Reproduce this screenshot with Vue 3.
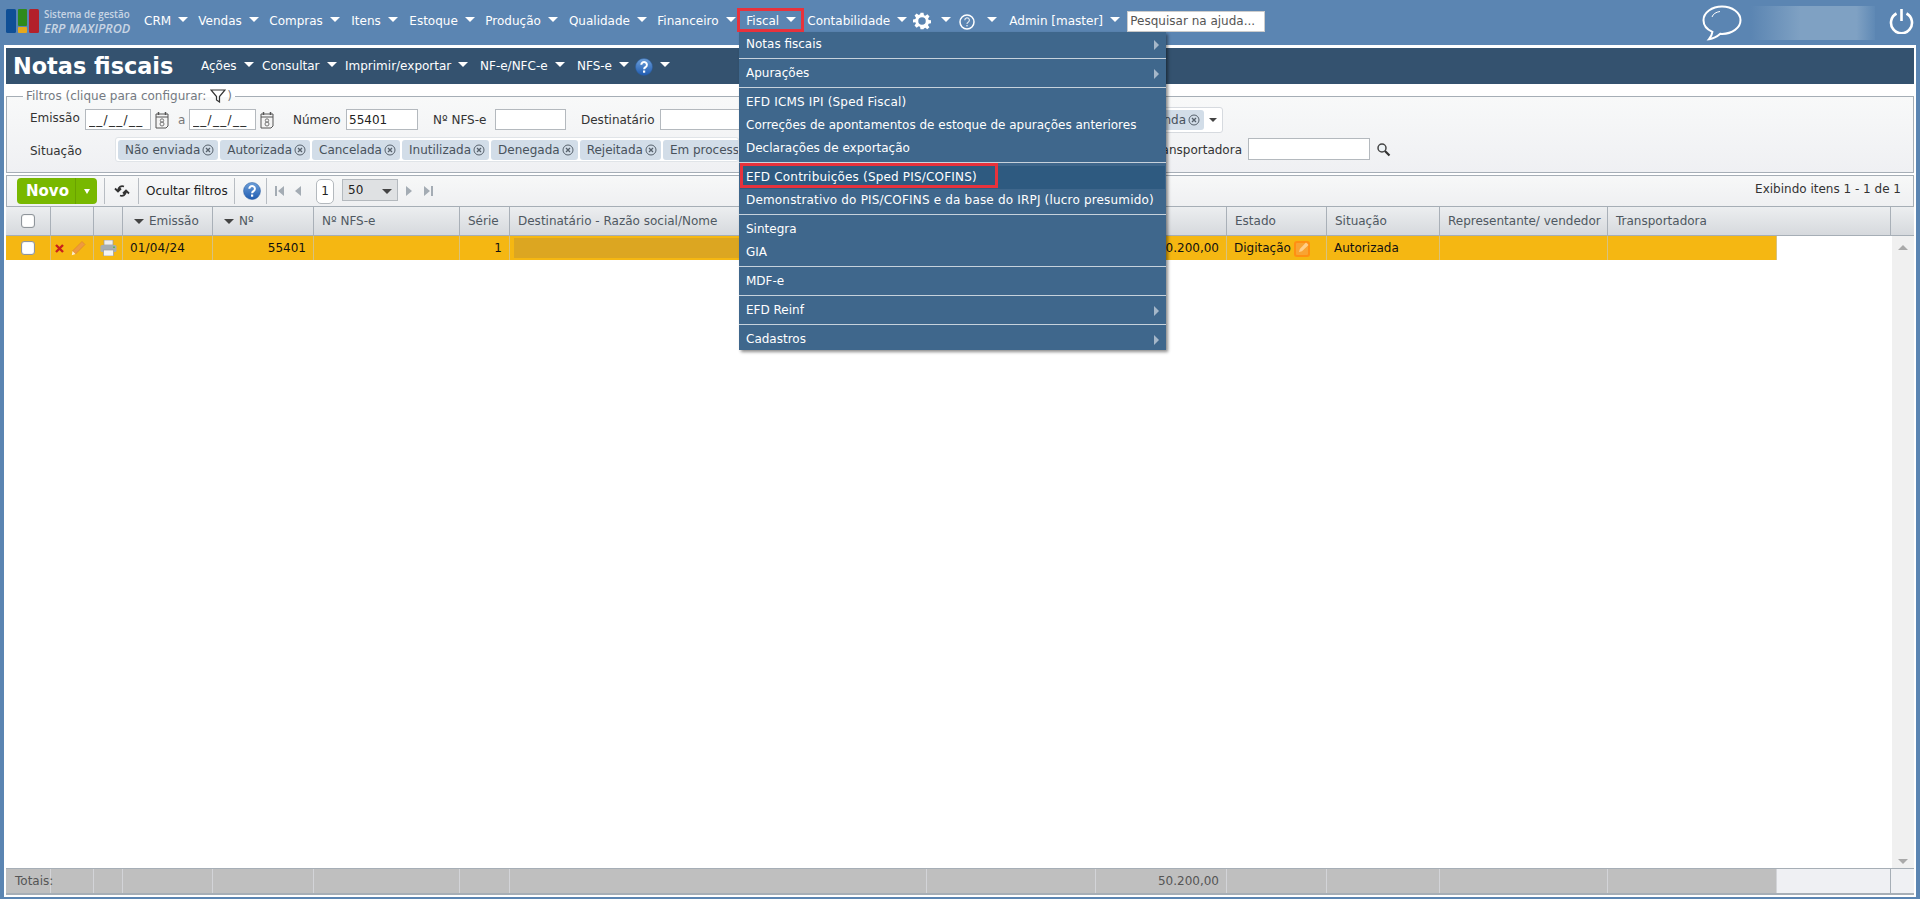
<script setup>
const topNav = [
  { label: 'CRM', w: 54.3 }, { label: 'Vendas', w: 71 }, { label: 'Compras', w: 82 }, { label: 'Itens', w: 58 },
  { label: 'Estoque', w: 76 }, { label: 'Produção', w: 83.6 }, { label: 'Qualidade', w: 88.4 }, { label: 'Financeiro', w: 89 }
]
const subNav = [
  { label: 'Ações', w: 61 }, { label: 'Consultar', w: 83 }, { label: 'Imprimir/exportar', w: 135 },
  { label: 'NF-e/NFC-e', w: 97 }, { label: 'NFS-e', w: 58 }
]
const chips = ['Não enviada', 'Autorizada', 'Cancelada', 'Inutilizada', 'Denegada', 'Rejeitada', 'Em processamento']
const cols = [
  { t: '' , k: 'check' }, { t: '' }, { t: '' }, { t: 'Emissão', sort: true }, { t: 'Nº', sort: true }, { t: 'Nº NFS-e' }, { t: 'Série' },
  { t: 'Destinatário - Razão social/Nome' }, { t: '' }, { t: 'Total (R$)' }, { t: 'Estado' }, { t: 'Situação' },
  { t: 'Representante/ vendedor' }, { t: 'Transportadora' }
]
const menu = [
  [{ t: 'Notas fiscais', sub: true }],
  [{ t: 'Apurações', sub: true }],
  [{ t: 'EFD ICMS IPI (Sped Fiscal)', wide: true }, { t: 'Correções de apontamentos de estoque de apurações anteriores' }, { t: 'Declarações de exportação' }],
  [{ t: 'EFD Contribuições (Sped PIS/COFINS)', active: true, wide: true }, { t: 'Demonstrativo do PIS/COFINS e da base do IRPJ (lucro presumido)', wide: true }],
  [{ t: 'Sintegra' }, { t: 'GIA' }],
  [{ t: 'MDF-e' }],
  [{ t: 'EFD Reinf', sub: true }],
  [{ t: 'Cadastros', sub: true }]
]
</script>

<template>
  <div class="page">
    <header class="topbar">
      <div class="logo">
        <svg width="33" height="24" viewBox="0 0 33 24">
          <rect x="0" y="0" width="10" height="24" rx="1.5" fill="#0f4f96" />
          <rect x="12" y="0" width="9" height="17" rx="1" fill="#2f8a1c" />
          <rect x="12" y="18" width="9" height="6" rx="1" fill="#e6a81c" />
          <rect x="23" y="0" width="10" height="24" rx="1.5" fill="#b3202a" />
        </svg>
        <div class="logo-text">
          <span class="logo-a">Sistema de gestão</span>
          <span class="logo-b">ERP MAXIPROD</span>
        </div>
      </div>
      <nav class="topnav">
        <span v-for="n in topNav" :key="n.label" class="navitem" :style="{ width: n.w + 'px' }">{{ n.label }}<i class="caret"></i></span>
        <span class="navitem fiscal">Fiscal<i class="caret"></i></span>
        <span class="navitem conta">Contabilidade<i class="caret"></i></span>
        <svg class="gear" width="18" height="18" viewBox="0 0 24 24"><path fill="#fff" fill-rule="evenodd" d="M10 1h4l.6 3.2 1.9.8 2.7-1.9 2.8 2.8-1.9 2.7.8 1.9 3.1.5v4l-3.2.6-.8 1.9 1.9 2.7-2.8 2.8-2.7-1.9-1.900.8L14 23h-4l-.6-3.2-1.900-.8-2.700 1.900-2.800-2.800 1.900-2.700-.8-1.900L0 14v-4l3.200-.6.8-1.900-1.900-2.700 2.800-2.800 2.700 1.900 1.900-.8zM12 7a5 5 0 1 0 0 10 5 5 0 0 0 0-10z"/></svg>
        <i class="caret solo c1"></i>
        <svg class="qmark" width="16" height="16" viewBox="0 0 16 16"><circle cx="8" cy="8" r="7" fill="none" stroke="#fff" stroke-width="1.5"/><path d="M5.8 6.200a2.300 2.300 0 1 1 3.400 2c-.8.5-1.200.9-1.200 1.800" fill="none" stroke="#dfe7ef" stroke-width="1.200"/><rect x="7.300" y="11" width="1.400" height="1.400" fill="#dfe7ef"/></svg>
        <i class="caret solo c2"></i>
        <span class="navitem admin">Admin [master]<i class="caret"></i></span>
        <input class="helpsearch" placeholder="Pesquisar na ajuda..." />
      </nav>
      <div class="topright">
        <svg width="40" height="36" viewBox="0 0 40 36"><path d="M20 1.500C9.800 1.500 1.500 7.600 1.500 15.200c0 5 3.600 9.300 8.900 11.700-.3 2.600-1.700 5.300-3.400 7.300 3.900-.5 8.500-2.900 11.300-5.400.6.050 1.100.1 1.700.1 10.200 0 18.500-6.100 18.500-13.700S30.200 1.500 20 1.500z" fill="none" stroke="#fff" stroke-width="2"/><path d="M10 12c1-3 4-5 8-5.500" fill="none" stroke="#fff" stroke-width="1"/></svg>
        <div class="blurbox"></div>
        <svg width="25" height="26" viewBox="0 0 25 26"><path d="M7.500 5.500a10.500 10.500 0 1 0 10 0" fill="none" stroke="#fff" stroke-width="2.600"/><path d="M12.500 1v12" stroke="#fff" stroke-width="2.600"/></svg>
      </div>
    </header>

    <main class="panel">
      <div class="titlebar">
        <h1>Notas fiscais</h1>
        <span v-for="n in subNav" :key="n.label" class="navitem" :style="{ width: n.w + 'px' }">{{ n.label }}<i class="caret"></i></span>
        <svg class="helpdot" width="18" height="18" viewBox="0 0 18 18"><use href="#help-blue" /></svg>
        <i class="caret solo c3"></i>
      </div>

      <svg width="0" height="0" class="defs">
        <defs>
          <linearGradient id="hb" x1="0" y1="0" x2="0" y2="1"><stop offset="0" stop-color="#6ea0da"/><stop offset="1" stop-color="#1f5bb0"/></linearGradient>
          <g id="help-blue"><circle cx="9" cy="9" r="8.500" fill="url(#hb)" stroke="#2a5d9f" stroke-width=".5"/><path d="M6.300 6.800a2.800 2.800 0 1 1 4.300 2.300c-1 .7-1.500 1-1.500 2.200" fill="none" stroke="#fff" stroke-width="2"/><rect x="8" y="12.500" width="2.200" height="2.200" fill="#fff"/></g>
          <g id="xc"><circle cx="6" cy="6" r="5" fill="none" stroke="#56606b" stroke-width="1"/><path d="M4 4l4 4M8 4l-4 4" stroke="#56606b" stroke-width="1.300"/></g>
          <g id="cal"><path d="M1 3h12v12l-2 2H1z" fill="#f4f4f4" stroke="#555" stroke-width="1"/><path d="M1 6h12" stroke="#555" stroke-width="1"/><path d="M3.500 1v3M10.500 1v3" stroke="#555" stroke-width="1.500"/><circle cx="7" cy="9.500" r="1.700" fill="none" stroke="#777"/><circle cx="7" cy="13" r="2" fill="none" stroke="#777"/></g>
        </defs>
      </svg>

      <fieldset class="filters">
        <legend>Filtros (clique para configurar:
          <svg width="16" height="14" viewBox="0 0 16 14"><path d="M1 1h14L9.500 7.500V13L6.500 11V7.500z" fill="none" stroke="#333" stroke-width="1.200"/></svg><span class="lg-close">)</span>
        </legend>
        <div class="frow r1">
          <span class="lab emi">Emissão</span>
          <input class="inp w66 mask" value="__/__/__" />
          <svg class="calicon" width="14" height="18" viewBox="0 0 14 18"><use href="#cal" /></svg>
          <span class="lab a">a</span>
          <input class="inp w67 mask" value="__/__/__" />
          <svg class="calicon" width="14" height="18" viewBox="0 0 14 18"><use href="#cal" /></svg>
          <span class="lab num">Número</span>
          <input class="inp w72" value="55401" />
          <span class="lab nfs">Nº NFS-e</span>
          <input class="inp w71" />
          <span class="lab dest">Destinatário</span>
          <input class="inp w140" />
          <div class="multi">
            <span class="chip">Venda<svg width="12" height="12" viewBox="0 0 12 12"><use href="#xc" /></svg></span>
            <i class="darkcaret"></i>
          </div>
        </div>
        <div class="frow r2">
          <span class="lab sit">Situação</span>
          <div class="chipbox">
            <span v-for="c in chips" :key="c" class="chip">{{ c }}<svg width="12" height="12" viewBox="0 0 12 12"><use href="#xc" /></svg></span>
          </div>
          <span class="lab transp">Transportadora</span>
          <input class="inp w122" />
          <svg class="mag" width="15" height="15" viewBox="0 0 15 15"><circle cx="6" cy="6" r="4" fill="#eef3f6" stroke="#444" stroke-width="1.500"/><path d="M9 9l4.500 4.500" stroke="#333" stroke-width="2.200"/></svg>
        </div>
      </fieldset>

      <div class="toolbar">
        <div class="novo"><span class="novo-t">Novo</span><span class="novo-a"><i></i></span></div>
        <div class="tbsep refresh">
          <svg width="16" height="14" viewBox="0 0 16 14"><path d="M10 2.500C7 1.500 4.500 3 4 6.500M1 4.500L4 7.500 7 4.500M6 11.500c3 1 5.500-.5 6-4M9 9.500l3-3 3 3" fill="none" stroke="#333" stroke-width="1.800"/></svg>
        </div>
        <div class="tbsep hide">Ocultar filtros</div>
        <div class="tbsep helpb"><svg width="18" height="18" viewBox="0 0 18 18"><use href="#help-blue" /></svg></div>
        <div class="pager">
          <svg class="first" width="9" height="10" viewBox="0 0 9 10"><path d="M0 0h2v10H0zM9 0v10L3 5z" fill="#a4acb4"/></svg>
          <svg class="prev" width="6" height="10" viewBox="0 0 6 10"><path d="M6 0v10L0 5z" fill="#a4acb4"/></svg>
          <span class="pagenum">1</span>
          <span class="pagesel">50<i class="darkcaret big"></i></span>
          <svg class="next" width="6" height="10" viewBox="0 0 6 10"><path d="M0 0v10l6-5z" fill="#a4acb4"/></svg>
          <svg class="last" width="9" height="10" viewBox="0 0 9 10"><path d="M9 0H7v10h2zM0 0v10l6-5z" fill="#a4acb4"/></svg>
        </div>
        <div class="showing">Exibindo itens 1 - 1 de 1</div>
      </div>

      <div class="grid">
        <div class="thead">
          <div class="cols head-cols">
            <div v-for="(c, i) in cols" :key="i" class="th" :class="{ center: c.k }">
              <span v-if="c.k" class="cb"></span>
              <i v-if="c.sort" class="sortc"></i>{{ c.t }}
            </div>
          </div>
          <div class="scrollhead"></div>
        </div>
        <div class="tbody">
          <div class="rows">
            <div class="cols row">
              <div class="td center"><span class="cb"></span></div>
              <div class="td icons">
                <svg width="9" height="9" viewBox="0 0 9 9"><path d="M1 1l7 7M8 1l-7 7" stroke="#c9201c" stroke-width="2.400"/></svg>
                <svg width="15" height="16" viewBox="0 0 15 16"><path d="M1.500 11L11 1.500 14 4.500 4.500 14z" fill="#ee9a3e" stroke="#d9822b" stroke-width=".6"/><path d="M1.500 11L.8 15.200 4.500 14z" fill="#fbeccf"/></svg>
              </div>
              <div class="td center">
                <svg width="17" height="16" viewBox="0 0 17 16"><rect x="4" y="0" width="9" height="5" fill="#eee" stroke="#999" stroke-width=".7"/><rect x=".5" y="5" width="16" height="7" rx="1.500" fill="#a6adb3"/><rect x="3.500" y="10" width="10" height="6" fill="#f4f4f4" stroke="#999" stroke-width=".7"/><rect x="13" y="6.500" width="2" height="1.500" fill="#5fb45a"/></svg>
              </div>
              <div class="td date">01/04/24</div>
              <div class="td right">55401</div>
              <div class="td"></div>
              <div class="td right">1</div>
              <div class="td"><div class="blurred"></div></div>
              <div class="td"></div>
              <div class="td right">50.200,00</div>
              <div class="td state">Digitação
                <svg width="17" height="17" viewBox="0 0 17 17"><rect x="1" y="2" width="14" height="14" rx="2" fill="#f9a431" stroke="#ff8f12" stroke-width="2"/><path d="M5 12l.8-3L12 2.500l2.500 2.500L8 11.200z" fill="#ffcf8a"/></svg>
              </div>
              <div class="td">Autorizada</div>
              <div class="td"></div>
              <div class="td"></div>
            </div>
          </div>
          <div class="scroller">
            <i class="sarrow up"></i>
            <i class="sarrow down"></i>
          </div>
        </div>
        <div class="tfoot">
          <div class="cols foot-cols">
            <div class="tf totais">Totais:</div>
            <div v-for="n in 8" :key="n" class="tf"></div>
            <div class="tf right">50.200,00</div>
            <div v-for="n in 4" :key="'x' + n" class="tf"></div>
          </div>
          <div class="foot-fill"></div>
          <div class="foot-end"></div>
        </div>
      </div>
    </main>

    <div class="fiscalmenu">
      <div v-for="(group, gi) in menu" :key="gi" class="mgroup">
        <div v-for="it in group" :key="it.t" class="mitem" :class="{ active: it.active, wide: it.wide }">
          {{ it.t }}<i v-if="it.sub" class="subarrow"></i>
        </div>
      </div>
    </div>
    <div class="redbox rb1"></div>
    <div class="redbox rb2"></div>
  </div>
</template>

<style>
html, body { margin: 0; padding: 0; background: #5b85b2; }
</style>

<style scoped>
* { box-sizing: border-box; }
.page { position: relative; width: 1920px; height: 899px; display: flex; flex-direction: column; background: #5b85b2; font-family: "DejaVu Sans", Verdana, sans-serif; font-size: 12px; color: #222; overflow: hidden; padding-bottom: 2px; }
.topbar { height: 45px; flex: none; display: flex; align-items: flex-start; position: relative; }
.logo { display: flex; margin: 9px 0 0 6px; width: 138px; }
.logo-text { margin-left: 5px; display: flex; flex-direction: column; color: #c8d5e4; }
.logo-a { font-size: 9.800px; line-height: 12px; font-weight: 600; white-space: nowrap; font-family: "Open Sans", sans-serif; }
.logo-b { font-size: 12.600px; line-height: 15px; font-weight: 600; font-style: italic; white-space: nowrap; font-family: "Open Sans", sans-serif; }
.topnav { display: flex; align-items: center; height: 30px; margin-top: 6px; }
.navitem { display: inline-flex; align-items: center; color: #fff; white-space: nowrap; flex: none; }
.caret { display: inline-block; width: 0; height: 0; border-left: 5px solid transparent; border-right: 5px solid transparent; border-top: 5px solid #fff; margin-left: 7px; margin-top: -3px; flex: none; }
.fiscal { width: 61px; }
.conta { width: 106px; }
.gear { flex: none; }
.caret.solo { margin: -4px 0 0 0; }
.c1 { margin-left: 10px !important; }
.qmark { margin-left: 8px; flex: none; margin-top: 2px; }
.c2 { margin-left: 12px !important; }
.admin { margin-left: 12px; width: 118px; }
.helpsearch { width: 138px; height: 21px; border: 1px solid #ccc; background: #fff; padding: 0 2px; font: 12px "DejaVu Sans", sans-serif; outline: none; flex: none; }
.helpsearch::placeholder { color: #555; opacity: 1; }
.topright { position: absolute; left: 1702px; top: 5px; display: flex; align-items: flex-start; }
.blurbox { width: 124px; height: 34px; margin: 1px 14px 0 9px; background: linear-gradient(90deg, #5b85b2, #7fa1c3 40%, #7fa1c3 85%, #5f89b5); }
.topright svg:last-child { margin-top: 3px; }

.panel { flex: 1; min-height: 0; margin: 0 4px; border: 2px solid #fff; background: #fff; display: flex; flex-direction: column; padding-top: 1px; }
.titlebar { height: 36px; flex: none; background: #34526f; display: flex; align-items: center; padding-left: 7px; }
.titlebar h1 { margin: 0; width: 188px; color: #fff; font-size: 22.400px; font-weight: bold; line-height: 36px; white-space: nowrap; font-family: "DejaVu Sans", sans-serif; }
.helpdot { flex: none; margin-top: 1px; }
.c3 { margin-left: 7px !important; }
.defs { position: absolute; }

.filters { margin: 5px 0 0; padding: 4px 0 0 23px; height: 84px; flex: none; border: 1px solid #a6aeb6; background: linear-gradient(#f8f9f9, #eff0f3); min-width: 0; }
.filters legend { padding: 0 3px; margin-left: -7px; height: 14px; line-height: 14px; color: #747a82; white-space: nowrap; font-size: 12px; display: flex; align-items: center; gap: 4px; }
.lg-close { margin-left: -3px; }
.frow { display: flex; align-items: center; }
.r1 { height: 26px; }
.r2 { height: 25px; margin-top: 4px; }
.lab { flex: none; color: #333; white-space: nowrap; }
.emi { width: 55px; margin-top: -5px; }
.inp { flex: none; height: 21px; border: 1px solid #b4b9be; background: #fff; padding: 0 2px; font: 12px "DejaVu Sans", sans-serif; color: #222; outline: none; margin-top: -1px; }
.mask { letter-spacing: 1.300px; padding-left: 3px; }
.w66 { width: 66px; } .w67 { width: 67px; } .w72 { width: 72px; } .w71 { width: 71px; } .w140 { width: 140px; } .w122 { width: 122px; height: 22px; }
.calicon { margin-left: 4px; flex: none; }
.a { margin-left: 9px; width: 11px; color: #777; }
.num { margin-left: 19px; width: 53px; }
.nfs { margin-left: 15px; width: 62px; }
.dest { margin-left: 15px; width: 79px; }
.multi { width: 401px; margin-left: 22px; height: 26px; border: 1px solid #d6dadf; border-radius: 3px; background: #fff; display: flex; align-items: center; justify-content: flex-end; padding-right: 5px; flex: none; }
.chip { display: inline-flex; align-items: center; gap: 2px; height: 20px; padding: 0 4px 0 7px; background: #d2dde8; border-radius: 3px; color: #48525c; white-space: nowrap; flex: none; }
.darkcaret { display: inline-block; width: 0; height: 0; border-left: 4px solid transparent; border-right: 4px solid transparent; border-top: 4px solid #444; margin-left: 5px; }
.sit { width: 85px; margin-top: 3px; }
.chipbox { width: 624px; height: 25px; border: 1px solid #e0e4e8; border-radius: 3px; background: #fff; display: flex; align-items: center; gap: 2px; padding-left: 2px; overflow: hidden; flex: none; }
.transp { width: 106px; margin-left: 397px; text-align: right; margin-right: 6px; }
.mag { margin-left: 6px; flex: none; }

.toolbar { margin-top: 2px; height: 32px; flex: none; border: 1px solid #a6aeb6; background: linear-gradient(#f7f8f8, #eff0f2); display: flex; align-items: center; padding-left: 10px; }
.novo { width: 80px; height: 26px; background: #78b800; border-radius: 4px; display: flex; color: #fff; font-weight: bold; flex: none; }
.novo-t { width: 58px; padding-left: 3px; font-size: 15px; line-height: 26px; text-align: center; }
.novo-a { flex: 1; border-left: 1px solid #6aa200; display: flex; align-items: center; justify-content: center; }
.novo-a i { width: 0; height: 0; border-left: 3.500px solid transparent; border-right: 3.500px solid transparent; border-top: 5px solid #fff; }
.tbsep { height: 26px; border-left: 1px solid #b8bdc3; display: flex; align-items: center; flex: none; }
.refresh { margin-left: 7px; width: 34px; justify-content: center; }
.hide { width: 96px; padding-left: 7px; color: #222; white-space: nowrap; }
.helpb { width: 33px; padding-left: 8px; border-right: 1px solid #b8bdc3; }
.pager { display: flex; align-items: center; flex: none; }
.first { margin-left: 8px; }
.prev { margin-left: 11px; }
.pagenum { margin-left: 15px; width: 18px; height: 25px; border: 1px solid #b4b9be; border-radius: 5px; background: #fff; display: flex; align-items: center; justify-content: center; }
.pagesel { margin: -3px 0 0 8px; width: 56px; height: 22px; border: 1px solid #b4b9be; background: #dfe1e3; display: flex; align-items: center; padding-left: 5px; justify-content: space-between; padding-right: 5px; }
.darkcaret.big { border-left-width: 5px; border-right-width: 5px; border-top-width: 5px; margin-top: 3px; }
.next { margin-left: 8px; }
.last { margin-left: 12px; }
.showing { margin-left: auto; padding-right: 12px; margin-top: -4px; color: #333; white-space: nowrap; }

.grid { flex: 1; min-height: 0; display: flex; flex-direction: column; }
.cols { display: grid; grid-template-columns: 45px 43px 29px 90px 101px 146px 50px 417px 169px 131px 100px 113px 168px 169px; flex: none; }
.thead { height: 29px; display: flex; flex: none; background: linear-gradient(#eceef0, #d6d9dd); border-bottom: 1px solid #a6aeb6; }
.head-cols { grid-template-columns: 45px 43px 29px 90px 101px 146px 50px 417px 169px 131px 100px 113px 168px 283px; }
.th { border-right: 1px solid #a9b0b8; padding-left: 8px; display: flex; align-items: center; color: #4f5861; white-space: nowrap; overflow: hidden; }
.th.center { justify-content: center; padding: 0; }
.scrollhead { flex: 1; }
.sortc { width: 0; height: 0; border-left: 5px solid transparent; border-right: 5px solid transparent; border-top: 5px solid #444; margin: 1px 5px 0 3px; }
.cb { display: inline-block; width: 14px; height: 14px; border: 1px solid #8f959b; border-radius: 3px; background: #fff; box-shadow: inset 0 0 1px #999; }
.tbody { flex: 1; min-height: 0; display: flex; }
.rows { flex: 1; }
.row { background: #f5b712; height: 24px; width: 1771px; }
.td { border-right: 1px solid #d8c27e; padding: 0 7px 0 6px; display: flex; align-items: center; color: #111; white-space: nowrap; }
.td.center { justify-content: center; padding: 0; }
.td.right { justify-content: flex-end; }
.td.icons { padding: 0 0 0 4px; gap: 7px; }
.td.state { gap: 3px; }
.td.date { padding-left: 7px; letter-spacing: .15px; }
.td:nth-child(8) { padding: 0 0 0 4px; }
.td:nth-child(11), .td:nth-child(12) { padding-left: 7px; }
.blurred { width: 100%; height: 20px; background: #dca621; }
.scroller { width: 22px; background: #f0f0f0; flex: none; display: flex; flex-direction: column; justify-content: space-between; align-items: center; padding: 9px 0 4px; }
.sarrow { width: 0; height: 0; border-left: 5px solid transparent; border-right: 5px solid transparent; }
.sarrow.up { border-bottom: 5px solid #a9a9a9; }
.sarrow.down { border-top: 5px solid #a9a9a9; }
.tfoot { height: 27px; flex: none; display: flex; border-top: 1px solid #a6aeb6; border-bottom: 2px solid #a6aeb6; background: #eff0f3; }
.foot-cols { background: #bfbfbf; }
.tf { border-right: 1px solid #d3d4d8; display: flex; align-items: center; justify-content: flex-end; padding-right: 7px; color: #555; white-space: nowrap; }
.tf.totais { justify-content: flex-start; padding-left: 9px; }
.foot-fill { width: 114px; border-right: 1px solid #a6aeb6; }
.foot-end { flex: 1; }

.fiscalmenu { position: absolute; left: 739px; top: 32px; width: 427px; height: 318px; background: #3f678c; box-shadow: 2px 2px 3px rgba(0,0,0,.45); padding-top: 1px; z-index: 5; color: #fff; }
.mgroup { border-bottom: 1px solid #c7d2dc; margin-bottom: 3px; padding-bottom: 2px; }
.mgroup:last-child { border-bottom: 0; }
.mitem { position: relative; height: 23px; line-height: 23px; padding-left: 7px; white-space: nowrap; }
.mitem.wide { letter-spacing: .18px; }
.mitem.active { background: #2e5a80; margin: 0 1px; padding-left: 6px; }
.subarrow { position: absolute; right: 7px; top: 7px; width: 0; height: 0; border-top: 5px solid transparent; border-bottom: 5px solid transparent; border-left: 5px solid #a5b7c9; }
.redbox { position: absolute; border: 3px solid #e8323c; z-index: 6; pointer-events: none; }
.rb1 { left: 737px; top: 8px; width: 67px; height: 24px; }
.rb2 { left: 740px; top: 163px; width: 258px; height: 25px; }
</style>
